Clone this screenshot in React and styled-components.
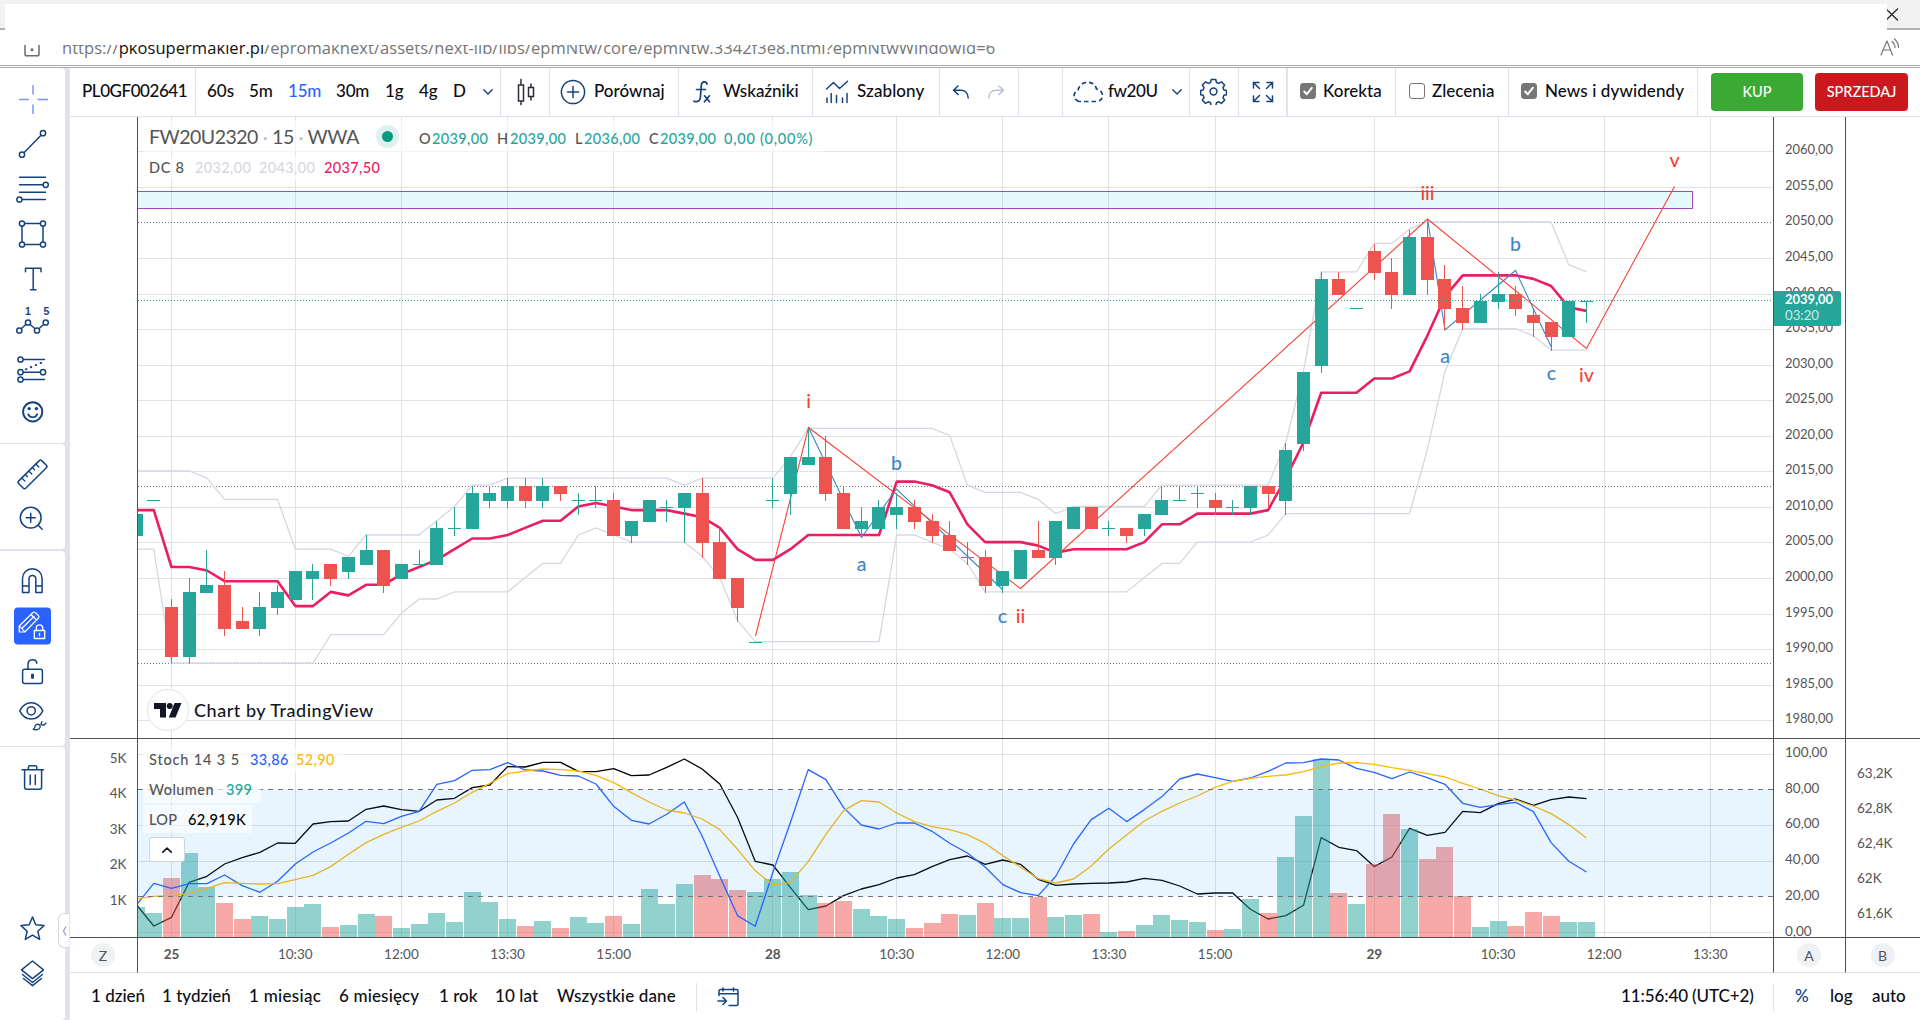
import React from 'react';
import styled, { createGlobalStyle } from 'styled-components';

const GlobalStyle = createGlobalStyle`
    * { box-sizing: border-box; }
    body { margin: 0; background: #fff; font-family: Lato, "Liberation Sans", sans-serif; color: #0c0e15; }
    svg { display: block; }
`;

const navy = '#15437e';
const line = '#e0e3eb';
const axis = '#4f5052';
const teal = '#26a69a';
const red = '#ef5350';

// --- Layout ---
const Page = styled.div`
    width: 1920px; height: 1020px; overflow: hidden;
    display: flex; flex-direction: column; background: #fff;
`;
const TabStrip = styled.div`
    height: 30px; flex: none; display: flex; background: #f2f2f2;
    border-bottom: 2px solid #b2b2b2;
`;
const BlankTab = styled.div`
    margin: 4px 0 -2px 5px; width: 1882px; background: #fff;
`;
const CloseBox = styled.div`
    width: 33px; padding-top: 8px;
`;
const AddressBar = styled.div`
    height: 38px; flex: none; display: flex; align-items: flex-start;
    border-bottom: 3px double #a9a9a9;
`;
const LockBox = styled.div`
    width: 62px; padding: 15px 0 0 24px;
`;
const ReadAloudBox = styled.div`
    padding-top: 8px;
`;
const UrlClip = styled.div`
    margin-top: 15px; height: 16px; overflow: hidden; width: 1818px;
`;
const Url = styled.div`
    margin-top: -8px; white-space: nowrap;
    font: 16.5px/22px "Open Sans", sans-serif; letter-spacing: 0.05px; color: #757575;
    b { font-weight: 400; color: #111; }
`;
const Body = styled.div`
    flex: 1; min-height: 0; display: flex;
`;
const Sidebar = styled.div`
    width: 70px; flex: none; background: ${line}; padding-right: 5px;
    display: flex; flex-direction: column;
`;
const ToolGroup = styled.div`
    background: #fff; border-radius: 0 4px 4px 0; height: ${props => props.$height}px;
    padding: ${props => props.$top}px 0 ${props => props.$bottom || 0}px;
    margin-bottom: ${props => props.$gap ?? 1}px;
    flex: none; display: flex; flex-direction: column; position: relative;
`;
const Spacer = styled.div`
    flex: 1;
`;
const CollapseTab = styled.div`
    position: absolute; left: 58px; top: 166px; width: 11px; height: 35px;
    background: #fff; border: 1px solid #d5d8e2; border-right: none; border-radius: 6px 0 0 6px;
    display: flex; align-items: center; justify-content: center;
`;
const Main = styled.div`
    flex: 1; min-width: 0; display: flex; flex-direction: column;
`;

// --- Top toolbar ---
const Toolbar = styled.div`
    height: 49px; flex: none; display: flex; border-bottom: 1px solid ${line};
`;
const Cell = styled.div`
    width: ${props => props.$width}px; flex: none; display: flex; align-items: center;
    padding-left: ${props => props.$pad || 0}px; padding-bottom: 1px;
    gap: ${props => props.$gap || 0}px;
    border-right: ${props => props.$border ?? 1}px solid ${line};
`;
const ToolText = styled.span`
    width: ${props => props.$width}px; flex: none; white-space: nowrap;
    font-size: 17px; line-height: 24px; font-weight: 500;
    margin-left: ${props => props.$left || 0}px; margin-top: -1px;
    letter-spacing: ${props => props.$spacing || 0}px;
    color: ${props => props.$color || '#0c0e15'};
`;
const CheckBox = styled.span`
    width: 16px; height: 16px; flex: none; border-radius: 3px; margin-top: -1px;
    border: 1.5px solid #767676; background: ${props => props.$checked ? '#767676' : '#fff'};
    display: flex; align-items: center; justify-content: center;
`;
const TradeButton = styled.button`
    width: ${props => props.$width}px; height: 38px; border: none; border-radius: 4px; padding: 0;
    margin-right: 12px; color: #fff; background: ${props => props.$color};
    font: 500 14.5px Lato, sans-serif;
`;

// --- Chart grid ---
const ChartGrid = styled.div`
    display: grid; flex: none;
    grid-template-columns: 68px 1635px 72px 75px;
    grid-template-rows: 622px 199px 35px;
`;
const Scale = styled.div`
    border-bottom: 1px solid ${props => props.$light ? line : axis};
    border-left: ${props => props.$left ? `1px solid ${axis}` : 'none'};
    border-right: ${props => props.$right ? `1px solid ${axis}` : 'none'};
    display: flex; align-items: center; justify-content: center;
`;
const Pane = styled.div`
    position: relative; border-bottom: 1px solid ${props => props.$light ? line : axis};
`;
const Round = styled.span`
    width: 24px; height: 24px; border-radius: 50%; background: #f0f1f5; color: #50535e;
    display: flex; align-items: center; justify-content: center; font-size: 14px;
    margin-right: 1px;
`;
const AxisText = styled.text`
    font-family: Lato, sans-serif; font-size: 13.5px; fill: ${props => props.$color || '#555'};
    font-weight: ${props => props.$weight || 400};
`;
const WaveText = styled.text`
    font-family: Lato, sans-serif; font-size: 19.5px; font-weight: 500; text-anchor: middle;
`;
const Legend = styled.div`
    position: absolute; left: 5px; top: ${props => props.$top}px; height: ${props => props.$height}px;
    width: ${props => props.$width}px; padding-left: 6px;
    display: flex; align-items: center; background: rgba(255, 255, 255, 0.6); white-space: nowrap;
`;
const LegendTitle = styled.span`
    width: 227px; font-size: 19.5px; color: #555; letter-spacing: -0.5px; word-spacing: 0.3px;
    i { font-style: normal; color: #b8bbc6; }
`;
const LegendText = styled.span`
    font-size: 14.5px; font-weight: 500; color: ${props => props.$color || '#555'};
    width: ${props => props.$width}px; letter-spacing: ${props => props.$spacing ?? 0.35}px;
    padding-top: ${props => props.$drop || 0}px;
`;
const StatusDot = styled.span`
    width: 23px; height: 23px; border-radius: 50%; background: #dff1ef; margin-right: 20px;
    display: flex; align-items: center; justify-content: center;
    &::after { content: ''; width: 11px; height: 11px; border-radius: 50%; background: #089981; }
`;
const Attribution = styled.div`
    position: absolute; left: 9px; top: 572px; display: flex; align-items: center;
    font-size: 18px; font-weight: 500; color: #131722; letter-spacing: 0.53px;
`;
const LogoCircle = styled.span`
    width: 42px; height: 42px; border-radius: 50%; border: 1px solid #e0e3eb; background: #fff;
    display: flex; align-items: center; justify-content: center; margin-right: 5px;
`;
const LegendToggle = styled.div`
    position: absolute; left: 11px; top: 98px; width: 36px; height: 25px; background: #fff;
    border: 1px solid #d1d4dc; border-radius: 3px; display: flex; align-items: center; justify-content: center;
`;

// --- Bottom bar ---
const BottomBar = styled.div`
    height: 47px; flex: none; display: flex; align-items: center; padding-left: 21px;
`;
const Divider = styled.span`
    width: 1px; height: 28px; margin-right: ${props => props.$gap || 0}px; background: ${line};
`;

// --- Data: one row per 15 minute bar, the first one has index -2 ---
const CANDLES = [
    // color, high, top, bottom, low, volume bar height
    ['g', 2009, 2009, 2006, 2006, 30], ['g', 2011, 2011, 2011, 2011, 24],
    ['r', 1997, 1996, 1989, 1988, 59], ['g', 2000, 1998, 1989, 1988, 84],
    ['g', 2004, 1999, 1998, 1998, 50], ['r', 2001, 1999, 1993, 1992, 34],
    ['r', 1996, 1994, 1993, 1993, 18], ['g', 1998, 1996, 1993, 1992, 21],
    ['g', 1999, 1998, 1996, 1995, 18], ['g', 2001, 2001, 1997, 1997, 30],
    ['g', 2002, 2001, 2000, 1997, 33], ['r', 2002, 2002, 2000, 1999, 10],
    ['g', 2003, 2003, 2001, 2000, 12], ['g', 2006, 2004, 2002, 2002, 23],
    ['r', 2004, 2004, 1999, 1998, 21], ['g', 2002, 2002, 2000, 2000, 9],
    ['g', 2004, 2002, 2002, 2002, 13], ['g', 2008, 2007, 2002, 2002, 24],
    ['g', 2010, 2007, 2007, 2006, 15], ['g', 2013, 2012, 2007, 2007, 45],
    ['g', 2013, 2012, 2011, 2010, 35], ['g', 2014, 2013, 2011, 2010, 18],
    ['r', 2014, 2013, 2011, 2010, 11], ['g', 2014, 2013, 2011, 2010, 16],
    ['r', 2013, 2013, 2012, 2011, 9], ['g', 2012, 2011, 2011, 2009, 20],
    ['g', 2013, 2011, 2011, 2010, 14], ['r', 2012, 2011, 2006, 2006, 21],
    ['g', 2008, 2008, 2006, 2005, 13], ['g', 2011, 2011, 2008, 2008, 48],
    ['g', 2011, 2010, 2010, 2008, 33], ['g', 2012, 2012, 2010, 2005, 53],
    ['r', 2014, 2012, 2005, 2003, 62], ['r', 2007, 2005, 2000, 2000, 58],
    ['r', 2000, 2000, 1996, 1994, 47], ['g', 1991, 1991, 1991, 1991, 45],
    ['g', 2014, 2011, 2011, 2010, 58], ['g', 2017, 2017, 2012, 2009, 65],
    ['g', 2021, 2017, 2016, 2016, 42], ['r', 2020, 2017, 2012, 2011, 34],
    ['r', 2013, 2012, 2007, 2007, 36], ['g', 2010, 2008, 2007, 2006, 28],
    ['g', 2011, 2010, 2007, 2007, 21], ['g', 2012, 2010, 2009, 2007, 18],
    ['r', 2011, 2010, 2008, 2007, 9], ['r', 2009, 2008, 2006, 2005, 14],
    ['r', 2008, 2006, 2004, 2004, 23], ['g', 2005, 2003, 2003, 2002, 22],
    ['r', 2004, 2003, 1999, 1998, 34], ['g', 2001, 2001, 1999, 1998, 19],
    ['g', 2004, 2004, 2000, 2000, 19], ['r', 2008, 2004, 2003, 2003, 40],
    ['g', 2008, 2008, 2003, 2002, 20], ['g', 2010, 2010, 2007, 2007, 22],
    ['r', 2010, 2010, 2007, 2007, 23], ['g', 2008, 2007, 2007, 2006, 5],
    ['r', 2007, 2007, 2006, 2005, 6], ['g', 2009, 2009, 2007, 2006, 12],
    ['g', 2013, 2011, 2009, 2009, 22], ['g', 2013, 2011, 2011, 2011, 17],
    ['g', 2013, 2012, 2012, 2010, 15], ['r', 2012, 2011, 2010, 2009, 7],
    ['g', 2011, 2010, 2010, 2009, 8], ['g', 2013, 2013, 2010, 2009, 38],
    ['r', 2013, 2013, 2012, 2010, 24], ['g', 2019, 2018, 2011, 2009, 80],
    ['g', 2029, 2029, 2019, 2018, 121], ['g', 2043, 2042, 2030, 2029, 178],
    ['r', 2043, 2042, 2040, 2040, 44], ['g', 2038, 2038, 2038, 2038, 33],
    ['r', 2047, 2046, 2043, 2042, 73], ['r', 2045, 2043, 2040, 2038, 123],
    ['g', 2049, 2048, 2040, 2040, 108], ['r', 2050, 2048, 2042, 2040, 78],
    ['r', 2044, 2042, 2038, 2035, 90], ['r', 2041, 2038, 2036, 2035, 41],
    ['g', 2040, 2039, 2036, 2036, 10], ['g', 2043, 2040, 2039, 2038, 16],
    ['r', 2041, 2040, 2038, 2037, 11], ['r', 2038, 2037, 2036, 2034, 25],
    ['r', 2036, 2036, 2034, 2032, 21], ['g', 2039, 2039, 2034, 2034, 15],
    ['g', 2039, 2039, 2039, 2036, 15],
];

// Indicator values, in thirds of a pixel below y = 680
const LOP = [672, 737, 711, 606, 588, 551, 532, 516, 488, 489, 431, 424, 422, 387, 377, 388, 393, 359, 354, 322, 314, 259, 260, 246, 246, 273, 274, 265, 286, 284, 261, 236, 266, 311, 411, 543, 554, 622, 688, 677, 646, 626, 613, 593, 583, 559, 538, 527, 552, 539, 552, 597, 615, 611, 609, 608, 605, 594, 600, 617, 641, 638, 638, 687, 716, 706, 675, 472, 501, 511, 559, 530, 444, 465, 456, 393, 397, 370, 356, 375, 358, 350, 355];
const STOCH_K = [675, 609, 624, 610, 610, 584, 616, 636, 603, 551, 515, 488, 458, 423, 430, 408, 393, 312, 301, 270, 268, 247, 269, 272, 285, 287, 311, 378, 420, 431, 402, 365, 467, 588, 706, 738, 576, 426, 268, 298, 382, 434, 446, 428, 428, 453, 489, 518, 560, 613, 637, 646, 588, 491, 418, 384, 424, 388, 349, 296, 281, 292, 303, 293, 273, 248, 247, 236, 239, 264, 276, 295, 275, 292, 312, 369, 381, 373, 366, 394, 487, 543, 575];
const STOCH_D = [656, 648, 646, 639, 624, 607, 609, 611, 610, 598, 585, 559, 522, 487, 462, 441, 422, 393, 368, 336, 309, 280, 272, 266, 268, 272, 285, 307, 337, 365, 389, 398, 416, 448, 507, 571, 614, 606, 544, 462, 391, 361, 365, 398, 424, 439, 448, 463, 489, 526, 560, 595, 608, 596, 557, 506, 464, 422, 393, 368, 347, 321, 303, 294, 288, 284, 274, 259, 248, 247, 252, 262, 270, 280, 290, 309, 326, 346, 359, 377, 400, 433, 473];

const TIMES = [
    [0, '25'], [7, '10:30'], [13, '12:00'], [19, '13:30'], [25, '15:00'], [34, '28'], [41, '10:30'],
    [47, '12:00'], [53, '13:30'], [59, '15:00'], [68, '29'], [75, '10:30'], [81, '12:00'], [87, '13:30'],
];
const PRICES = Array.from({ length: 17 }, (_, n) => 2060 - n * 5);

const xAt = i => 171.5 + i * 17.687;
const yAt = p => 151.8 + (2060 - p) * 7.1125;
const snap = v => Math.floor(v) + 0.5;
const path = pts => pts.map(p => p.join(',')).join(' ');
const series = values => path(values.map((v, n) => [xAt(n - 2).toFixed(1), (680.3 + v / 3).toFixed(1)]));

// Donchian channel, period 8. The first bars depend on history left of the screen.
const FIRST_UPPER = [2015, 2015, 2015, 2015, 2014, 2011, 2011, 2011, 2011];
const FIRST_LOWER = [2004, 2004, 1988, 1988, 1988, 1988, 1988, 1988, 1988];
const channel = CANDLES.map((c, n) => {
    if (n < FIRST_UPPER.length) return [FIRST_UPPER[n], FIRST_LOWER[n]];
    const win = CANDLES.slice(n - 7, n + 1);
    return [Math.max(...win.map(w => w[1])), Math.min(...win.map(w => w[4]))];
});
const channelLine = fn => path(channel.map((c, n) => [xAt(n - 2).toFixed(1), (yAt(fn(c)) - 0.9).toFixed(1)]));

const WAVES = [
    ['i', 808.5, 408, '#f44336'], ['ii', 1020.5, 622.5, '#f44336'], ['iii', 1427.5, 200, '#f44336'],
    ['iv', 1586.5, 382, '#f44336'], ['v', 1674.5, 166.5, '#f44336'],
    ['a', 861.5, 571, '#3d85c6'], ['b', 896.5, 470, '#3d85c6'], ['c', 1002.5, 622.5, '#3d85c6'],
    ['a', 1445, 363, '#3d85c6'], ['b', 1515.5, 251, '#3d85c6'], ['c', 1551.5, 380, '#3d85c6'],
];

// --- Icons ---
const Svg = styled.svg`
    flex: none; fill: none; stroke-linecap: round; stroke-linejoin: round;
`;
const Icon = ({ w, h, children, color = navy, width = 1.5 }) => (
    <Svg width={w} height={h} viewBox={`0 0 ${w} ${h}`} stroke={color} strokeWidth={width}>{children}</Svg>
);
const Tool = ({ children, color }) => <Icon w={65} h={45} color={color}>{children}</Icon>;
const Dots = ({ at, r = 2.6 }) => at.map(([x, y]) => <circle key={`${x}-${y}`} cx={x} cy={y} r={r} fill="#fff" />);
const Digit = styled.text`
    font: 700 10.5px "Liberation Sans", sans-serif; fill: ${navy}; stroke: none;
`;
const Chevron = () => <Icon w={10} h={6} width={1.4}><path d="M.8 .8 5 5 9.2 .8" /></Icon>;

const DrawingTools = () => (
    <Sidebar>
        <ToolGroup $height={375} $top={8.5}>
            <Tool color="#7696ff"><path strokeLinecap="butt" d="M33 8v9.500M33 27.500v9.500M19 22.500h10M37.500 22.500h10.500" /></Tool>
            <Tool><path d="M22 32.700 43 11.200" /><Dots at={[[43, 11.2], [22, 32.7]]} /></Tool>
            <Tool><path d="M19.500 10.200h26M19.500 17.800h26M19.500 25.200h26M19.500 32.500h26" /><Dots at={[[45.7, 17.8], [19.4, 32.5]]} /></Tool>
            <Tool><path d="M22 11.500h21v21h-21z" /><Dots at={[[22, 11.5], [43, 11.5], [22, 32.5], [43, 32.5]]} /></Tool>
            <Tool><path d="M25.500 14.800V11.200h15.500v3.600M33.200 11.200v21.600M30.500 32.800h5.500" /></Tool>
            <Tool>
                <path d="M19.300 28.500 28 20.500 37 28.500 45.700 20.500" />
                <Dots at={[[19.3, 28.5], [28, 20.5], [37, 28.5], [45.7, 20.5]]} />
                <Digit x="25" y="13.2">1</Digit>
                <Digit x="43.6" y="13.2">5</Digit>
            </Tool>
            <Tool>
                <path d="M20.500 12.500h24M20.500 25.200h22M20.500 32.500h24" />
                <path d="M26 22.300 43.500 14.800" strokeDasharray=".5 4.8" strokeWidth="2" />
                <Dots at={[[20.5, 12.5], [20.5, 25.2], [43, 25.2], [20.5, 32.5]]} />
            </Tool>
            <Tool>
                <circle cx="32.7" cy="19.8" r="9.6" strokeWidth="2" />
                <path d="M28.200 22.300c1.500 4 7.500 4 9 0" strokeWidth="1.8" />
                <circle cx="29.2" cy="16.6" r="1.7" fill={navy} stroke="none" />
                <circle cx="36.4" cy="16.6" r="1.7" fill={navy} stroke="none" />
            </Tool>
        </ToolGroup>
        <ToolGroup $height={105} $top={8} $gap={2}>
            <Tool>
                <path d="M39.300 8.600q1.200-1.200 2.400 0l4.700 4.700q1.200 1.200 0 2.400L25.700 36.200q-1.200 1.200-2.400 0l-4.700-4.700q-1.200-1.200 0-2.400z" />
                <path d="M21.800 26l3 3M25.300 22.500l2.200 2.200M28.800 19l3 3M32.300 15.500l2.200 2.200M35.800 12l3 3" strokeWidth="1.3" />
            </Tool>
            <Tool><circle cx="30.7" cy="20.7" r="10.4" /><path d="M26.200 20.700h9M30.700 16.200v9M38.200 28.200l4 4" /></Tool>
        </ToolGroup>
        <ToolGroup $height={195} $top={6.5}>
            <Tool><path d="M22.500 34.500V20.500a9.800 9.800 0 0 1 19.600 0v14h-6.300V20.800a3.400 3.400 0 0 0-6.800 0v13.700zM22.500 28h6.500M35.800 28h6.300" /></Tool>
            <Tool color="#fff">
                <rect x="14" y="4.5" width="37" height="37" rx="4" fill="#2962ff" stroke="none" />
                <path d="M19.200 29v-6L33 9.500q1.200-1 2.300 0l3.200 3.200q1 1.100 0 2.300L24.800 29zM19.400 23.200l5.300 5.500M31 11.500l5.500 5.500M22.500 24.800 34 13.500" strokeWidth="1.2" />
                <path d="M34.300 27.500h10.400v8H34.300zM36.300 27.300v-2.300a3.200 3.200 0 0 1 6.400 0v2.300M39.500 30.500v2" strokeWidth="1.3" />
            </Tool>
            <Tool>
                <rect x="22.6" y="21.2" width="19.8" height="14.3" rx="2" />
                <path d="M28 21v-4.600c0-5.800 8.200-6.200 8.800-1.200" />
                <rect x="31.8" y="26.5" width="1.4" height="3.6" fill={navy} />
            </Tool>
            <Tool>
                <path d="M19.800 17.800C25 7 37.500 7 42.800 17.800 37.500 28.600 25 28.600 19.800 17.800z" />
                <circle cx="31.2" cy="17.8" r="4.1" />
                <path d="M33.200 36.200c2-.6 1.200-3 2.800-4.400 1.800-1.400 4.600.2 4.200 2.300-.5 2.600-4.600 3.200-7 2.100zM41 31.300l.8-2.600M41.800 32h2.200l2-2" strokeWidth="1.3" />
            </Tool>
        </ToolGroup>
        <ToolGroup $height={273} $top={7.5} $bottom={24} $gap={0}>
            <Tool><path d="M22 14.800h21.500M28.400 14.600v-2.400q0-1.400 1.400-1.400h5.600q1.400 0 1.400 1.400v2.400M24.600 15v17.200q0 2 2 2h13q2 0 2-2V15M30.200 20v9.500M35.300 20v9.500" /></Tool>
            <Spacer />
            <CollapseTab><Icon w={5} h={10} color="#8a9bb5" width={1.2}><path d="M3.800 1 1.400 5 3.800 9" /></Icon></CollapseTab>
            <Tool><path d="M32.500 11l3.300 7.800 8.200.8-6.200 5.600 1.900 8.200-7.200-4.300-7.200 4.300 1.900-8.200L21 19.600l8.200-.8z" /></Tool>
            <Tool><path d="M32.500 10 43.500 18.800 32.500 27.600 21.500 18.800zM22.500 23.500 32.500 31.500 42.500 23.500M23.500 27.500 32.500 34.700 41.500 27.500" /></Tool>
        </ToolGroup>
    </Sidebar>
);

const Check = ({ on }) => (
    <CheckBox $checked={on}>
        {on && <Icon w={12} h={12} color="#fff" width={2}><path d="M2.200 6.500 4.800 9.200 9.800 2.800" /></Icon>}
    </CheckBox>
);

const TopBar = () => (
    <Toolbar>
        <Cell $width={126} $pad={12}><ToolText $spacing={-0.45}>PL0GF002641</ToolText></Cell>
        <Cell $width={305} $pad={11}>
            <ToolText $width={42}>60s</ToolText>
            <ToolText $width={39}>5m</ToolText>
            <ToolText $width={48} $color="#2962ff" $spacing={-0.2}>15m</ToolText>
            <ToolText $width={49} $spacing={-0.2}>30m</ToolText>
            <ToolText $width={34}>1g</ToolText>
            <ToolText $width={34}>4g</ToolText>
            <ToolText $width={30}>D</ToolText>
            <Chevron />
        </Cell>
        <Cell $width={49} $pad={15}>
            <Icon w={20} h={28} color="#2a2e39"><path strokeLinejoin="miter" d="M2.500 7h5v16h-5zM5 1.500V7M5 23v3.500M12.500 9.500h5v9h-5zM15 6v3.500M15 18.500v3.500" /></Icon>
        </Cell>
        <Cell $width={129} $pad={10}>
            <Icon w={26} h={26}><circle cx="13" cy="13" r="11.6" /><path d="M7.500 13h11M13 7.500v11" /></Icon>
            <ToolText $left={8}>Porównaj</ToolText>
        </Cell>
        <Cell $width={134} $pad={14}>
            <Icon w={18} h={24} width={1.7}><path d="M14 4.200C13.500 .8 8.800 1 8.300 5L7.300 18c-.5 4-4.500 4-6.300 3.200M3.500 9.500h9M11.500 15.800l5 6M16.500 15.800l-5 6" /></Icon>
            <ToolText $left={12}>Wskaźniki</ToolText>
        </Cell>
        <Cell $width={127} $pad={12}>
            <Icon w={24} h={24}><path d="M1.500 9 8.500 2.500 14.500 8.500 22.500 1.200M2 18v4.500M6.200 13.500v9M11.500 15.500v7M17.500 18v4.500M22 13.500v9" /></Icon>
            <ToolText $left={8} $spacing={0.1}>Szablony</ToolText>
        </Cell>
        <Cell $width={79} $pad={12} $gap={17}>
            <Icon w={18} h={14}><path d="M6 1 1.500 5.200 6 9.400M1.800 5.200H9c4 0 7 3 7.200 7.800" /></Icon>
            <Icon w={18} h={14} color="#b5c3d6"><path d="M12 1 16.500 5.200 12 9.400M16.200 5.200H9c-4 0-7 3-7.200 7.800" /></Icon>
        </Cell>
        <Cell $width={44} />
        <Cell $width={127} $pad={9}>
            <Icon w={32} h={22} width={1.7}><path strokeLinecap="butt" strokeDasharray="4.5 3" d="M7 20.500a6 6 0 0 1-1-11.500C7 4.500 11 1 16 1.200c4.500.2 7.500 2.800 8.500 6.800 3.500.5 6 3.300 6 6.500 0 3.500-2.500 6-6 6z" /></Icon>
            <ToolText $left={4} $width={64} $spacing={-0.4}>fw20U</ToolText>
            <Chevron />
        </Cell>
        <Cell $width={49} $pad={10}>
            <Icon w={27} h={27}>
                <path d="M11.200 1.500h4.600l.7 3 2.200.9 2.700-1.600 3.200 3.200-1.600 2.700.9 2.200 2.600.6v4.200l-2.600.6-.9 2.200 1.600 2.700-3.200 3.200-2.700-1.600-2.200.9-.7 3h-4.600l-.7-3-2.200-.9-2.700 1.600-3.200-3.200L4 19.500l-.9-2.200-2.400-.6v-4.200L3.100 12 4 9.700 2.400 7l3.200-3.200 2.700 1.600 2.200-.9z" />
                <circle cx="13.5" cy="13.5" r="3.4" />
            </Icon>
        </Cell>
        <Cell $width={49} $pad={13} $border={2}>
            <Icon w={22} h={22}><path strokeLinejoin="miter" d="M1.500 7V1.500H7M15 1.500h5.500V7M20.500 15v5.500H15M7 20.500H1.500V15M2 2l5.500 5.500M20 2l-5.500 5.500M20 20l-5.500-5.500M2 20l5.500-5.500" /></Icon>
        </Cell>
        <Cell $width={108} $pad={12}><Check on /><ToolText $left={7}>Korekta</ToolText></Cell>
        <Cell $width={113} $pad={13}><Check /><ToolText $left={7}>Zlecenia</ToolText></Cell>
        <Cell $width={189} $pad={12}><Check on /><ToolText $left={8} $spacing={0.1}>News i dywidendy</ToolText></Cell>
        <Cell $width={222} $pad={13} $border={0}>
            <TradeButton $width={92} $color="#3aaa35">KUP</TradeButton>
            <TradeButton $width={93} $color="#cb181e">SPRZEDAJ</TradeButton>
        </Cell>
    </Toolbar>
);

const GridLines = ({ top, bottom }) => TIMES.map(([i]) => (
    <line key={i} x1={snap(xAt(i))} x2={snap(xAt(i))} y1={top} y2={bottom} stroke="#e1e2e4" />
));

const PricePane = () => (
    <Pane>
        <svg width="1635" height="621" viewBox="138 117 1635 621">
            <GridLines top={117} bottom={738} />
            {PRICES.filter(p => p !== 2050).map(p => <line key={p} x1="138" x2="1773" y1={snap(yAt(p))} y2={snap(yAt(p))} stroke="#e1e2e4" />)}
            <rect x="130" y="191.5" width="1562.5" height="17" fill="#00bcd4" fillOpacity="0.1" stroke="#9c27b0" strokeOpacity="0.85" />
            <path d="M138 222.500H1773M138 486.500H1773M138 663.500H1773" stroke="#77787d" strokeDasharray="1 2" />
            <g fill="none" stroke="#d6d7e2" strokeWidth="1.3">
                <polyline points={channelLine(c => c[0])} />
                <polyline points={channelLine(c => c[1])} />
            </g>
            <polyline points={channelLine(c => (c[0] + c[1]) / 2)} fill="none" stroke="#e91e63" strokeWidth="2.6" strokeLinejoin="round" />
            <g fill="none" strokeWidth="1.1">
                <path stroke="#3d85c6" d="M808.500 427.500 861.500 537.500 896.500 489 1002.500 589.500M1427.500 219 1445 330 1515.500 270.500 1551.500 347.500" />
                <path stroke="#f44336" d="M755.500 636 808.500 427.500 1020.500 588.500 1427.500 219 1586.500 348.500 1674.500 186.500" />
            </g>
            {CANDLES.map(([c, high, top, bottom, low], n) => {
                const x = Math.floor(xAt(n - 2));
                const y = Math.floor(yAt(top));
                return (
                    <g key={n} fill={c === 'g' ? teal : red}>
                        <rect x={x} y={Math.floor(yAt(high))} width="1" height={Math.floor(yAt(low)) - Math.floor(yAt(high)) + 1} />
                        <rect x={x - 6} y={y} width="13" height={Math.floor(yAt(bottom)) - y + 1} />
                    </g>
                );
            })}
            <path d="M138 300.500H1773" stroke={teal} strokeDasharray="1 2" />
            {WAVES.map(([t, x, y, fill]) => <WaveText key={`${t}${x}`} x={x} y={y} fill={fill}>{t}</WaveText>)}
        </svg>
        <Legend $top={3} $height={32} $width={680}>
            <LegendTitle>FW20U2320 <i>·</i> 15 <i>·</i> WWA</LegendTitle>
            <StatusDot />
            <LegendText $drop={4} $width={13}>O</LegendText><LegendText $drop={4} $width={65} $color={teal}>2039,00</LegendText>
            <LegendText $drop={4} $width={13}>H</LegendText><LegendText $drop={4} $width={65} $color={teal}>2039,00</LegendText>
            <LegendText $drop={4} $width={9}>L</LegendText><LegendText $drop={4} $width={65} $color={teal}>2036,00</LegendText>
            <LegendText $drop={4} $width={11}>C</LegendText><LegendText $drop={4} $width={64} $color={teal}>2039,00</LegendText>
            <LegendText $drop={4} $spacing={0.75} $color={teal}>0,00 (0,00%)</LegendText>
        </Legend>
        <Legend $top={38} $height={25} $width={240}>
            <LegendText $width={46} $spacing={0.7}>DC 8</LegendText>
            <LegendText $width={64} $color="#d6d7e2">2032,00</LegendText>
            <LegendText $width={65} $color="#d6d7e2">2043,00</LegendText>
            <LegendText $color="#e91e63">2037,50</LegendText>
        </Legend>
        <Attribution>
            <LogoCircle>
                <svg width="28" height="15" viewBox="0 0 28 15" fill="#131722">
                    <path d="M0 0h12v14.500H6V6H0z" /><circle cx="15.7" cy="3" r="3" /><path d="M20.500 0H27.500L21.500 14.500H14.800z" />
                </svg>
            </LogoCircle>
            Chart by TradingView
        </Attribution>
    </Pane>
);

const StochPane = () => (
    <Pane>
        <svg width="1635" height="198" viewBox="138 739 1635 198">
            <GridLines top={739} bottom={937} />
            <path d="M138 754.500H1773M138 825.500H1773M138 861.500H1773M138 932.500H1773" stroke="#e1e2e4" />
            <polyline points={series(LOP)} fill="none" stroke="#000" strokeWidth="1.3" strokeLinejoin="round" />
            {CANDLES.map((c, n) => (
                <rect key={n} x={Math.floor(xAt(n - 2)) - 8} y={937 - c[5]} width="17" height={c[5]} fill={c[0] === 'g' ? teal : red} fillOpacity="0.5" />
            ))}
            <g fill="none" strokeWidth="1.3" strokeLinejoin="round">
                <polyline points={series(STOCH_K)} stroke="#2962ff" />
                <polyline points={series(STOCH_D)} stroke="#fbb90d" />
            </g>
            <rect x="138" y="789.5" width="1635" height="107" fill="#2196f3" fillOpacity="0.1" />
            <path d="M138 789.500H1773M138 896.500H1773" stroke="#6d7583" strokeDasharray="5 5" />
        </svg>
        <Legend $top={7} $height={27} $width={201}>
            <LegendText $width={101} $spacing={0.85}>Stoch 14 3 5</LegendText>
            <LegendText $width={46} $color="#2962ff">33,86</LegendText>
            <LegendText $color="#fbb90d">52,90</LegendText>
        </Legend>
        <Legend $top={36} $height={28} $width={118}>
            <LegendText $width={77} $spacing={0.45}>Wolumen</LegendText><LegendText $color={teal}>399</LegendText>
        </Legend>
        <Legend $top={66} $height={28} $width={109}>
            <LegendText $width={39}>LOP</LegendText><LegendText $color="#000" $spacing={0.45}>62,919K</LegendText>
        </Legend>
        <LegendToggle><Icon w={10} h={6} color="#131722" width={1.6}><path d="M.8 5.200 5 1.200 9.200 5.200" /></Icon></LegendToggle>
    </Pane>
);

const Chart = () => (
    <ChartGrid>
        <Scale $right />
        <PricePane />
        <Scale $left>
            <svg width="71" height="621" viewBox="1774 117 71 621">
                {PRICES.map(p => <AxisText key={p} x="1785" y={yAt(p) + 2.5} textLength="48" lengthAdjust="spacingAndGlyphs">{p},00</AxisText>)}
                <path d="M1773 291h66q2 0 2 2v31q0 2-2 2h-66z" fill={teal} />
                <AxisText x="1785" y="304" $color="#fff" $weight={700} textLength="48" lengthAdjust="spacingAndGlyphs">2039,00</AxisText>
                <AxisText x="1785" y="320" $color="#c9e9e6" textLength="34" lengthAdjust="spacingAndGlyphs">03:20</AxisText>
            </svg>
        </Scale>
        <Scale $left />

        <Scale $right>
            <svg width="67" height="198" viewBox="70 739 67 198">
                {[5, 4, 3, 2, 1].map(k => <AxisText key={k} x="126.5" y={763 + (5 - k) * 35.4} textAnchor="end">{k}K</AxisText>)}
            </svg>
        </Scale>
        <StochPane />
        <Scale $left>
            <svg width="71" height="198" viewBox="1774 739 71 198">
                {[100, 80, 60, 40, 20, 0].map(v => <AxisText key={v} x="1785" y={757 + (100 - v) * 1.785}>{v},00</AxisText>)}
            </svg>
        </Scale>
        <Scale $left>
            <svg width="74" height="198" viewBox="1846 739 74 198">
                {['63,2K', '62,8K', '62,4K', '62K', '61,6K'].map((t, n) => <AxisText key={t} x="1857" y={778 + n * 35}>{t}</AxisText>)}
            </svg>
        </Scale>

        <Scale $right $light><Round>Z</Round></Scale>
        <Pane $light>
            <svg width="1635" height="34" viewBox="138 938 1635 34">
                {TIMES.map(([i, t]) => <AxisText key={i} x={xAt(i)} y="959" textAnchor="middle" $weight={t.includes(':') ? 400 : 700}>{t}</AxisText>)}
            </svg>
        </Pane>
        <Scale $left $light><Round>A</Round></Scale>
        <Scale $left $light><Round>B</Round></Scale>
    </ChartGrid>
);

const Ranges = () => (
    <BottomBar>
        <ToolText $width={71}>1 dzień</ToolText>
        <ToolText $width={87}>1 tydzień</ToolText>
        <ToolText $width={90} $spacing={0.3}>1 miesiąc</ToolText>
        <ToolText $width={100} $spacing={0.15}>6 miesięcy</ToolText>
        <ToolText $width={56}>1 rok</ToolText>
        <ToolText $width={62} $spacing={0.1}>10 lat</ToolText>
        <ToolText $width={139} $spacing={0.15}>Wszystkie dane</ToolText>
        <Divider $gap={20} />
        <Icon w={23} h={20}><path d="M2 8.500V4q0-1.500 1.500-1.500h16q1.500 0 1.500 1.500v13q0 1.500-1.500 1.500H12M2 6.800h19M6 1v3M16.500 1v3M1 14h8M6 10.500 9.500 14 6 17.500" /></Icon>
        <Spacer />
        <ToolText $width={152} $spacing={-0.1}>11:56:40 (UTC+2)</ToolText>
        <Divider />
        <ToolText $left={21} $width={35} $color={navy}>%</ToolText>
        <ToolText $width={42}>log</ToolText>
        <ToolText $width={48}>auto</ToolText>
    </BottomBar>
);

const App = () => (
    <Page>
        <GlobalStyle />
        <TabStrip>
            <BlankTab />
            <CloseBox><Icon w={12} h={13} color="#222" width={1.3}><path d="M-1 1 10.500 12M-1 12 10.500 1" /></Icon></CloseBox>
        </TabStrip>
        <AddressBar>
            <LockBox>
                <Icon w={17} h={12} color="#6b6b6b">
                    <path strokeLinecap="butt" d="M1 0v9q0 1.800 1.800 1.800h10.400q1.800 0 1.800-1.800V0" />
                    <circle cx="8" cy="4.8" r=".8" fill="#6b6b6b" />
                </Icon>
            </LockBox>
            <UrlClip>
                <Url>https://<b>pkosupermakler.pl</b>/epromaknext/assets/next-lib/libs/epmNtw/core/epmNtw.3342f3e8.html?epmNtwWindowId=6</Url>
            </UrlClip>
            <ReadAloudBox>
                <Icon w={20} h={18} color="#777" width={1.2}><path d="M1 17 7 3l5.500 14M3.200 12h7.300M12 3.500q3 2.500 3 6M14.500 1q4 3.500 4 8.500" /></Icon>
            </ReadAloudBox>
        </AddressBar>
        <Body>
            <DrawingTools />
            <Main>
                <TopBar />
                <Chart />
                <Ranges />
            </Main>
        </Body>
    </Page>
);

export default App;
